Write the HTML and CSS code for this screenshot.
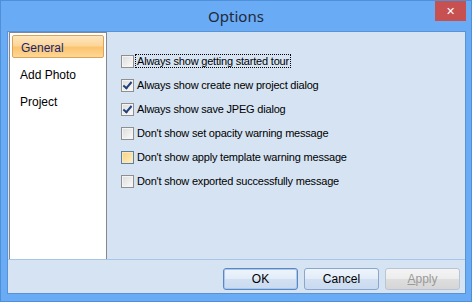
FILE: index.html
```html
<!DOCTYPE html>
<html lang="en">
<head>
	<meta charset="utf-8">
	<title>Options</title>
	<link rel="stylesheet" href="styles.css">
</head>
<body>

<div class="window">

	<div class="titlebar">
		<span class="title">Options</span>
		<div class="closebtn">&#10005;</div>
	</div>

	<div class="client">

		<div class="main">

			<div class="sidebar">
				<div class="navitem active">General</div>
				<div class="navitem">Add Photo</div>
				<div class="navitem">Project</div>
			</div>

			<div class="options">
				<label class="option"><span class="check"></span><span class="label focused">Always show getting started tour</span></label>
				<label class="option"><span class="check checked"></span><span class="label">Always show create new project dialog</span></label>
				<label class="option"><span class="check checked"></span><span class="label">Always show save JPEG dialog</span></label>
				<label class="option"><span class="check"></span><span class="label">Don't show set opacity warning message</span></label>
				<label class="option"><span class="check hover"></span><span class="label">Don't show apply template warning message</span></label>
				<label class="option"><span class="check"></span><span class="label">Don't show exported successfully message</span></label>
			</div>

		</div>

		<div class="footer">
			<button class="button default">OK</button>
			<button class="button">Cancel</button>
			<button class="button disabled"><u>A</u>pply</button>
		</div>

	</div>

</div>

</body>
</html>
```
FILE: styles.css
```css
body {
	margin: 0;
	background: #6aabf5;
}

.window {
	width: 470px;
	height: 300px;
	background: #6aabf5;
	border: 1px solid #4f8fd8;
	display: flex;
	flex-direction: column;
}

.titlebar {
	height: 30px;
	position: relative;
	display: flex;
	justify-content: center;
	align-items: center;
}

.title {
	font-family: "Noto Sans", "Open Sans", sans-serif;
	font-size: 15px;
	color: #1e2a3a;
	margin-top: -1px;
}

.closebtn {
	position: absolute;
	top: 0;
	right: 5px;
	width: 31px;
	height: 20px;
	background: #c75050;
	color: #fff;
	font-family: "DejaVu Sans", sans-serif;
	font-weight: bold;
	font-size: 11px;
	display: flex;
	align-items: center;
	justify-content: center;
}

.client {
	margin: 0 5px 7px 6px;
	flex: 1;
	background: #d5e3f2;
	border: 1px solid #5a92d6;
	display: flex;
	flex-direction: column;
	font-family: "Liberation Sans", Arial, sans-serif;
	font-size: 11px;
}

.main {
	display: flex;
	height: 227px;
	border-bottom: 1px solid #a7c5e8;
}

.sidebar {
	margin-left: 1px;
	width: 92px;
	background: #fff;
	border: 1px solid #828790;
	border-bottom: none;
	padding: 2px 2px 0 2px;
	font-size: 12px;
}

.navitem {
	height: 27px;
	line-height: 27px;
	padding-left: 8px;
	color: #000;
}

.navitem.active {
	height: 23px;
	margin-bottom: 4px;
	box-sizing: border-box;
	line-height: 24px;
	color: #14287a;
	border: 1px solid #dba45a;
	border-radius: 2px;
	background: linear-gradient(#fde6be 0%, #fdd69a 45%, #fbc46f 55%, #fdd796 100%);
}

.options {
	padding: 22px 0 0 14px;
	display: flex;
	flex-direction: column;
	gap: 10px;
	letter-spacing: -0.2px;
}

.option {
	display: flex;
	align-items: center;
	height: 14px;
	color: #000;
}

.check {
	width: 11px;
	height: 11px;
	border: 1px solid #8f8f8f;
	background: linear-gradient(135deg, #dcdcdc, #fbfbfb);
	box-shadow: inset 0 0 0 1px #f4f4f4;
	margin-right: 1px;
	position: relative;
}

.check.checked::after {
	content: "";
	position: absolute;
	left: 3px;
	top: 0px;
	width: 3px;
	height: 7px;
	border: solid #21407c;
	border-width: 0 2px 2px 0;
	transform: rotate(40deg);
}

.check.hover {
	border-color: #5e7ea8;
	background: linear-gradient(135deg, #f8d27a, #fdf0c8);
	box-shadow: inset 0 0 0 1px #fce8b8;
}

.label {
	padding: 0 1px;
	border: 1px dotted transparent;
}

.label.focused {
	border-color: #000;
}

.footer {
	flex: 1;
	display: flex;
	justify-content: flex-end;
	align-items: flex-start;
	gap: 6px;
	padding: 8px 5px 0 0;
}

.button {
	width: 75px;
	height: 22px;
	font-family: "Liberation Sans", Arial, sans-serif;
	font-size: 12px;
	color: #000;
	border: 1px solid #8aa6cc;
	border-radius: 3px;
	background: linear-gradient(#eef4fb 0%, #e2ecf8 50%, #d2e0f2 51%, #c9daf0 100%);
	padding: 0;
}

.button.default {
	border-color: #5b86c0;
	box-shadow: inset 0 0 0 1px #a9c8ef;
}

.button.disabled {
	color: #9a9a9a;
	border-color: #b8c4d2;
	background: linear-gradient(#f4f4f4 0%, #ececec 50%, #dedede 51%, #d6d6d6 100%);
}
```
